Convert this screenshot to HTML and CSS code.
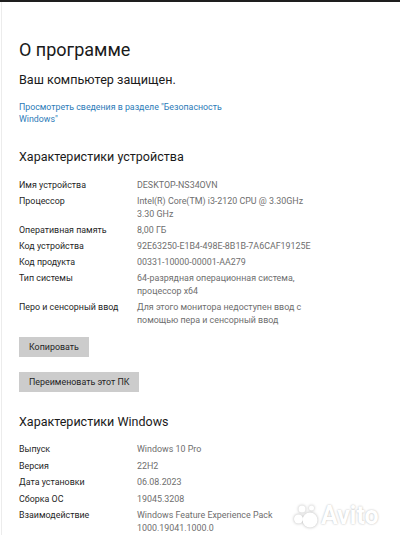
FILE: index.html
```html
<!DOCTYPE html>
<html lang="ru">
<head>
    <meta charset="UTF-8">
    <meta name="viewport" content="width=device-width, initial-scale=1.0">
    <title>О программе</title>
    <link rel="stylesheet" href="styles.css">
</head>
<body>
    <div class="topbar"></div>

    <div class="page">
        <h1>О программе</h1>
        <p class="status">Ваш компьютер защищен.</p>
        <a href="#" class="link">Просмотреть сведения в разделе "Безопасность<br>Windows"</a>

        <h2>Характеристики устройства</h2>
        <div class="specs device">
            <div class="label">Имя устройства</div>
            <div class="value">DESKTOP-NS34OVN</div>
            <div class="label">Процессор</div>
            <div class="value">Intel(R) Core(TM) i3-2120 CPU @ 3.30GHz<br>3.30 GHz</div>
            <div class="label">Оперативная память</div>
            <div class="value">8,00 ГБ</div>
            <div class="label">Код устройства</div>
            <div class="value">92E63250-E1B4-498E-8B1B-7A6CAF19125E</div>
            <div class="label">Код продукта</div>
            <div class="value">00331-10000-00001-AA279</div>
            <div class="label">Тип системы</div>
            <div class="value">64-разрядная операционная система,<br>процессор x64</div>
            <div class="label">Перо и сенсорный ввод</div>
            <div class="value">Для этого монитора недоступен ввод с<br>помощью пера и сенсорный ввод</div>
        </div>

        <div class="buttons">
            <button class="btn">Копировать</button>
            <button class="btn">Переименовать этот ПК</button>
        </div>

        <h2>Характеристики Windows</h2>
        <div class="specs windows">
            <div class="label">Выпуск</div>
            <div class="value">Windows 10 Pro</div>
            <div class="label">Версия</div>
            <div class="value">22H2</div>
            <div class="label">Дата установки</div>
            <div class="value">06.08.2023</div>
            <div class="label">Сборка ОС</div>
            <div class="value">19045.3208</div>
            <div class="label">Взаимодействие</div>
            <div class="value">Windows Feature Experience Pack<br>1000.19041.1000.0</div>
        </div>
    </div>

    <div class="watermark">
        <svg width="26" height="24" viewBox="0 0 26 24">
            <circle cx="17" cy="16" r="7.5"/>
            <circle cx="5.5" cy="15" r="4.5"/>
            <circle cx="9" cy="5" r="3.5"/>
            <circle cx="18.5" cy="4" r="2.5"/>
        </svg>
        <span>Avito</span>
    </div>
</body>
</html>
```

FILE: styles.css
```css
body {
    font-family: Roboto, "Noto Sans", sans-serif;
    margin: 0;
    padding: 0;
    background-color: #ffffff;
    color: #1a1a1a;
    position: relative;
    height: 540px;
    overflow: hidden;
}
.topbar {
    height: 2px;
    background-color: #1e1e1e;
}
.page {
    padding: 36px 0 0 17px;
    border-left: 1px solid #ececec;
    margin-left: 1px;
}
h1 {
    margin: 0;
    font-size: 18px;
    font-weight: normal;
    line-height: 24px;
}
.status {
    margin: 9px 0 0;
    font-size: 12.6px;
    line-height: 18px;
}
.link {
    display: block;
    margin-top: 13px;
    font-size: 8.8px;
    line-height: 11.5px;
    color: #2c7bb8;
    text-decoration: none;
}
h2 {
    margin: 23px 0 0;
    font-size: 12.5px;
    font-weight: normal;
    line-height: 18px;
}
.specs {
    display: grid;
    grid-template-columns: 118px 1fr;
    row-gap: 3px;
    margin-top: 12.5px;
    font-size: 8.9px;
    line-height: 13px;
}
.specs.windows {
    row-gap: 3.5px;
}
.specs .label {
    color: #1f1f1f;
}
.specs .value {
    color: #6e6e6e;
}
.buttons {
    display: flex;
    flex-direction: column;
    align-items: flex-start;
    gap: 15px;
    margin-top: 10px;
}
.btn {
    height: 20px;
    padding: 0 10px;
    border: none;
    background-color: #cccccc;
    color: #1f1f1f;
    font-family: Roboto, "Noto Sans", sans-serif;
    font-size: 8.9px;
}
.buttons + h2 {
    margin-top: 21px;
}
.watermark {
    position: absolute;
    left: 293px;
    top: 503px;
    display: flex;
    align-items: center;
    gap: 2px;
}
.watermark svg {
    fill: #ffffff;
    filter: drop-shadow(0 0 1.5px rgba(0, 0, 0, 0.3));
}
.watermark span {
    font-family: Roboto, "Noto Sans", sans-serif;
    font-weight: bold;
    font-size: 25px;
    line-height: 26px;
    color: #ffffff;
    text-shadow: 0 0 2px rgba(0, 0, 0, 0.3);
}
```
